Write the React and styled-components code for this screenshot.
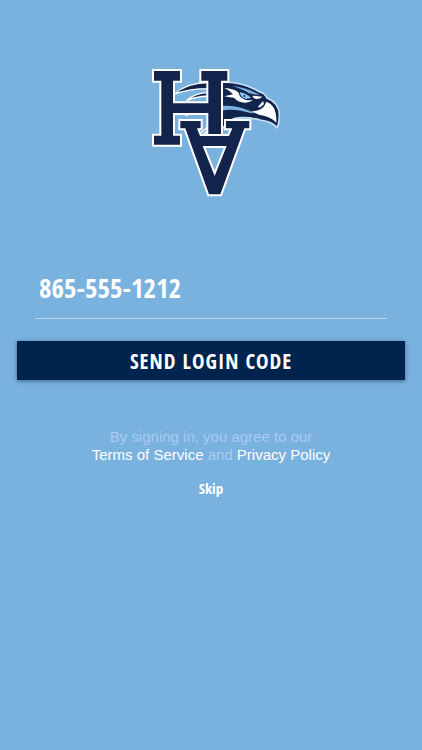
import React, { useState } from 'react';
import styled, { createGlobalStyle } from 'styled-components';

const GlobalStyle = createGlobalStyle`
  * {
    box-sizing: border-box;
  }
  body {
    margin: 0;
    background: #79b1df;
  }
`;

const Container = styled.main`
  min-height: 100vh;
  padding: 62px 17px 32px;
  display: flex;
  flex-direction: column;
  align-items: center;
  background: #79b1df;
  color: white;
  font-family: 'Open Sans Condensed', 'Liberation Sans Narrow',
    'Liberation Sans', sans-serif;
`;

const LogoImage = styled.svg`
  display: block;
  width: 144px;
  height: 140px;
  margin-left: 12px;
`;

const Form = styled.form`
  width: 100%;
  margin-top: 56px;
`;

const Field = styled.div`
  padding: 0 18px;
`;

const PhoneInput = styled.input`
  display: block;
  width: 100%;
  height: 61px;
  padding: 0 4px 2px;
  border: 0;
  border-bottom: 1px solid #c3d5ea;
  border-radius: 0;
  outline: none;
  background: transparent;
  color: white;
  font-family: inherit;
  font-size: 27px;
  font-weight: 700;
`;

const Button = styled.button`
  display: block;
  width: 100%;
  height: 39px;
  margin-top: 22px;
  border: 0;
  background: #00244e;
  box-shadow: 0 1px 4px rgba(0, 20, 60, 0.5);
  color: white;
  cursor: pointer;
  font-family: inherit;
  font-size: 21px;
  font-weight: 700;
  letter-spacing: 1px;
`;

const Terms = styled.p`
  margin: 48px 0 0;
  color: #aacbf0;
  font-family: 'Liberation Sans', sans-serif;
  font-size: 15px;
  line-height: 18px;
  text-align: center;
`;

const Link = styled.a`
  color: white;
  text-decoration: none;
`;

const SkipButton = styled.button`
  margin-top: 14px;
  padding: 0;
  border: 0;
  background: transparent;
  color: white;
  cursor: pointer;
  font-family: inherit;
  font-size: 15px;
  font-weight: 700;
  line-height: 20px;
`;

const Logo = () => (
  <LogoImage viewBox="0 0 432 420" role="img" aria-label="HVA Hawks">
    {/* feathers */}
    <g fill="#13244c" stroke="#ffffff" strokeWidth="4">
      <path d="M88 96C118 70 152 62 190 62V80C150 80 118 86 88 96Z" />
      <path d="M124 116C145 98 165 92 190 92V102C165 103 142 108 124 116Z" />
    </g>
    <path
      d="M120 160L140 156M168 214L190 192M176 217L192 202"
      fill="none"
      stroke="#ffffff"
      strokeWidth="4"
    />

    {/* head */}
    <path
      d="M228 60C275 59 315 72 344 90C354 92 361 97 366 108C392 118 405 140 403 166C402 180 400 190 396 197C384 182 370 178 346 174C315 166 270 162 252 178L228 204Z"
      fill="#13244c"
      stroke="#c6e3f8"
      strokeWidth="5"
    />
    <path
      d="M230 132C262 128 300 138 330 154C294 150 258 152 230 170Z"
      fill="#79b1df"
    />
    <path
      d="M230 146C262 140 292 146 318 154C286 152 256 156 230 174Z"
      fill="#13244c"
    />
    <path
      d="M262 72C294 76 322 84 344 100L312 94C298 84 280 78 262 72Z"
      fill="#79b1df"
    />

    {/* eye */}
    <path
      d="M238 78C258 79 272 84 281 92C284 108 298 117 324 114C304 128 280 122 268 108C260 106 250 106 238 103L264 97C258 90 250 84 238 78Z"
      fill="#ffffff"
    />
    <path
      d="M284 91C296 92 308 98 318 107C304 114 288 111 284 91Z"
      fill="#8cc4f0"
    />
    <circle cx="298" cy="102" r="3" fill="#13244c" />
    <path d="M322 101L352 104C344 111 334 113 326 108Z" fill="#ffffff" />

    {/* beak */}
    <path
      d="M364 119C384 125 396 146 394 182C380 166 362 162 342 158L318 148C336 148 350 142 358 132Z"
      fill="#ffffff"
    />
    <path d="M338 136L354 117L357 126L346 136Z" fill="#ffffff" />

    {/* letters */}
    <g
      fill="#13244c"
      fillRule="evenodd"
      stroke="#ffffff"
      strokeWidth="12"
      paintOrder="stroke"
    >
      <path d="M27 27H105V56H84V124H190V56H169V27H247V56H228V217H190V153H84V221H105V248H27V221H49V56H27Z" />
      <path d="M106 177H167V199H156L165 222H252L262 199H243V177H313V199H298L226 397H192L121 199H106ZM173 252H245L209 342Z" />
    </g>
  </LogoImage>
);

const App = () => {
  const [phone, setPhone] = useState('865-555-1212');

  return (
    <Container>
      <GlobalStyle />
      <Logo />
      <Form onSubmit={e => e.preventDefault()}>
        <Field>
          <PhoneInput
            type="tel"
            aria-label="Phone number"
            value={phone}
            onChange={e => setPhone(e.target.value)}
          />
        </Field>
        <Button type="submit">SEND LOGIN CODE</Button>
      </Form>
      <Terms>
        By signing in, you agree to our
        <br />
        <Link href="#terms">Terms of Service</Link> and{' '}
        <Link href="#privacy">Privacy Policy</Link>
      </Terms>
      <SkipButton type="button">Skip</SkipButton>
    </Container>
  );
};

export default App;
